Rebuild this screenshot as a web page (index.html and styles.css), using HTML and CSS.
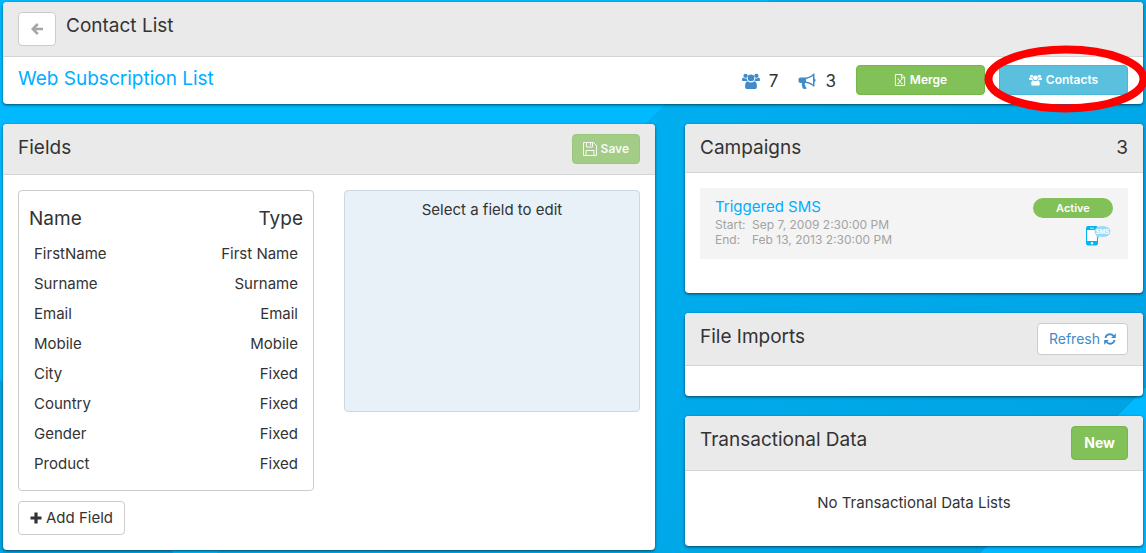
FILE: index.html
```html
<!DOCTYPE html>
<html lang="en">
<head>
<meta charset="utf-8">
<title>Contact List</title>
<link rel="stylesheet" href="styles.css">
</head>
<body>
<svg class="symbols" aria-hidden="true">
  <symbol id="users" viewBox="0 0 20 18">
    <circle cx="4" cy="3.3" r="2.4"/><circle cx="16" cy="3.3" r="2.4"/><circle cx="10" cy="5.6" r="3.7"/>
    <path d="M0 8.200C0 6.300.6 5.200 1.500 5.200C2.500 6.300 4.200 6.500 5.300 6C5.300 7.500 5.900 8.500 6.300 9H1.700C.6 9 0 8.900 0 8.200ZM20 8.200C20 6.300 19.400 5.200 18.500 5.200C17.500 6.300 15.800 6.500 14.700 6C14.700 7.500 14.100 8.500 13.700 9H18.300C19.400 9 20 8.900 20 8.200ZM6.400 9.200C8.600 11 11.400 11 13.600 9.200C15.700 9.200 16.600 12 16.600 15C16.600 17 15.600 18 14 18H6C4.400 18 3.400 17 3.400 15C3.400 12 4.300 9.200 6.400 9.200Z"/>
  </symbol>
</svg>
<main class="page">
  <section class="panel">
    <header class="panel-head top-head">
      <button class="btn back" aria-label="Back">
        <svg class="icon-12" viewBox="0 0 12 12"><path d="M6.800 1L1.800 6L6.800 11M2 6H12" fill="none" stroke="currentColor" stroke-width="2.600"/></svg>
      </button>
      <h1>Contact List</h1>
    </header>
    <div class="summary">
      <h2 class="list-name"><a href="#">Web Subscription List</a></h2>
      <span class="stat"><svg class="icon-18" viewBox="0 0 20 18"><use href="#users"/></svg>7</span>
      <span class="stat"><svg class="icon-18" viewBox="0 0 18 18"><path fill-rule="evenodd" d="M15.500 1.500H16.500V6.500C18 7 18 9.500 16.500 10V14.500H15.500C13 12.300 10 11 7.200 11C6.300 12 6.800 13 7.600 13.800C7 15 8 15.300 8.800 16C8 17.300 5.800 17.200 4.800 16.500C4.300 14.700 3.500 13 4 11H2.500C1.300 11 .5 10.200 .5 9V7.500C.5 6.300 1.300 5.500 2.500 5.500H7C10 5.500 13 4 15.500 1.500ZM15 4C13 5.500 10.800 6.500 8 6.900V9.600C10.800 10 13 11 15 12.500Z"/></svg>3</span>
      <div class="actions">
        <button class="btn green small">
          <svg class="icon-12" viewBox="0 0 12 13"><path class="outline" d="M1 .5H8L11 3.500V12.500H1ZM7.500 .5V4H11M4 5.500L8 10.500M8 5.500L4 10.500M3.300 5.500H5M7 5.500H8.700M3.300 10.500H5M7 10.500H8.700"/></svg>Merge</button>
        <div class="marked">
          <button class="btn cyan small"><svg class="icon-13" viewBox="0 0 20 18"><use href="#users"/></svg>Contacts</button>
          <svg class="ring" viewBox="0 0 164 68" aria-hidden="true"><ellipse cx="82" cy="34" rx="77.500" ry="29.500" fill="none" stroke="#f00" stroke-width="8"/></svg>
        </div>
      </div>
    </div>
  </section>

  <div class="columns">
    <section class="panel fields">
      <header class="panel-head">
        <h2>Fields</h2>
        <button class="btn green small save" disabled>
          <svg class="icon-14" viewBox="0 0 14 14"><path class="outline" d="M.5 .5H10.500L13.500 3.500V13.500H.5ZM3.500 .5V5H9.500V.5M7.500 1V3.500M3 13.500V8.500H11V13.500"/></svg>Save</button>
      </header>
      <div class="field-area">
        <div class="field-list">
          <div class="table-box">
            <table>
              <thead><tr><th>Name</th><th>Type</th></tr></thead>
              <tbody>
                <tr><td>FirstName</td><td>First Name</td></tr>
                <tr><td>Surname</td><td>Surname</td></tr>
                <tr><td>Email</td><td>Email</td></tr>
                <tr><td>Mobile</td><td>Mobile</td></tr>
                <tr><td>City</td><td>Fixed</td></tr>
                <tr><td>Country</td><td>Fixed</td></tr>
                <tr><td>Gender</td><td>Fixed</td></tr>
                <tr><td>Product</td><td>Fixed</td></tr>
              </tbody>
            </table>
          </div>
          <button class="btn add"><svg class="icon-12" viewBox="0 0 12 12"><path d="M6 .5V11.500M.5 6H11.500" stroke="currentColor" stroke-width="3.200"/></svg>Add Field</button>
        </div>
        <div class="editor">Select a field to edit</div>
      </div>
    </section>

    <div class="side">
      <section class="panel">
        <header class="panel-head"><h2>Campaigns</h2><span class="count">3</span></header>
        <div class="campaigns">
          <article class="campaign">
            <div>
              <h3><a href="#">Triggered SMS</a></h3>
              <dl><dt>Start:</dt><dd>Sep 7, 2009 2:30:00 PM</dd><dt>End:</dt><dd>Feb 13, 2013 2:30:00 PM</dd></dl>
            </div>
            <div class="status">
              <span class="pill">Active</span>
              <svg class="sms" viewBox="0 0 25 20"><path fill="#00b5f1" fill-rule="evenodd" d="M2 0H10Q12 0 12 2V17.500Q12 19.500 10 19.500H2Q0 19.500 0 17.500V2Q0 0 2 0ZM1.200 4V15H10.800V4Z"/><path fill="#fff" d="M1.200 4H10.800V15H1.200ZM4 1.800H8V2.500H4Z"/><circle cx="6" cy="17.200" r="1.200" fill="#fff"/><path d="M9.500 9L12.500 12L14 9Z" fill="#9bdaf6"/><ellipse cx="16.500" cy="5.500" rx="8" ry="5.500" fill="#9bdaf6"/><text x="16.500" y="7.700" text-anchor="middle" class="sms-text">SMS</text></svg>
            </div>
          </article>
        </div>
      </section>
      <section class="panel">
        <header class="panel-head"><h2>File Imports</h2>
          <button class="btn refresh">Refresh<svg class="icon-12" viewBox="0 0 12 12"><path d="M1.500 5C2 1.200 7 0 9.500 3M10.500 7C10 10.800 5 12 2.500 9" fill="none" stroke="currentColor" stroke-width="1.900"/><path d="M11.800 .3V5H7.100ZM.2 11.700V7H4.900Z"/></svg></button>
        </header>
        <div class="imports"></div>
      </section>
      <section class="panel">
        <header class="panel-head"><h2>Transactional Data</h2><button class="btn green new">New</button></header>
        <p class="empty">No Transactional Data Lists</p>
      </section>
    </div>
  </div>
</main>
</body>
</html>
```

FILE: styles.css
```css
* { box-sizing: border-box; }
body {
  margin: 0;
  min-height: 100vh;
  color: #333;
  font: 15px/20px Inter, "Liberation Sans", sans-serif;
  background:
    linear-gradient(45deg, #00a4e4 123px, transparent 123px),
    linear-gradient(135deg, #00b9ff 544px, #00aeef 544px, #00a4e4 1084px, #00b9ff 1084px);
}
h1, h2, h3, p, dl, dd { margin: 0; font-weight: 400; }
h1, h2 { font-size: 19px; line-height: 20px; }
a { color: #00aeff; text-decoration: none; }
svg { fill: currentColor; flex: none; }
.outline { fill: none; stroke: currentColor; }
.symbols { position: absolute; width: 0; height: 0; }
.icon-12 { width: 12px; height: 12px; }
.icon-13 { width: 13px; height: 12px; }
.icon-14 { width: 14px; height: 14px; }
.icon-18 { width: 18px; height: 18px; color: #428bca; }

.page { padding: 2px 3px 3px; }
.panel { background: #fff; border-radius: 4px; box-shadow: 0 1px 3px rgba(0, 0, 0, .6); }
.panel-head {
  display: flex;
  align-items: flex-start;
  justify-content: space-between;
  min-height: 49px;
  padding: 10px 15px;
  background: #eaeaea;
  border-bottom: 1px solid #d5d5d5;
  border-radius: 4px 4px 0 0;
}
.panel-head h2, .panel-head h1, .count { margin-top: 4px; }
.count { font-size: 19px; }
.top-head { justify-content: flex-start; gap: 10px; }

.btn {
  display: inline-flex;
  align-items: center;
  justify-content: center;
  gap: 4px;
  height: 34px;
  padding: 0 11px;
  border: 1px solid #ccc;
  border-radius: 4px;
  background: #fff;
  color: #333;
  font: inherit;
}
.back { width: 38px; color: #aaa5a5; }
.small { height: 30px; font-size: 12px; font-weight: 600; }
.green { background: #82c058; border-color: #75b749; color: #fff; }
.cyan { background: #5bc0de; border-color: #46b8da; color: #fff; }
.save { padding: 0 10px; opacity: .68; }
.refresh { height: 32px; color: #428bca; font-size: 14px; }
.new { padding: 0 12px; font-size: 14px; font-weight: 700; }

.summary { display: flex; align-items: flex-start; padding: 8px 15px 9px; }
.list-name { flex: 1; margin-top: 4px; }
.stat { display: flex; align-items: center; gap: 9px; margin: 6px 20px 0 0; font-size: 17px; }
.actions { display: flex; gap: 14px; }
.actions .btn { width: 129px; }
.marked { position: relative; }
.ring { position: absolute; left: -15px; top: -20px; width: 164px; height: 68px; pointer-events: none; }

.columns { display: grid; grid-template-columns: 652fr 458fr; gap: 30px; margin-top: 20px; align-items: start; }
.field-area { display: grid; grid-template-columns: 1fr 1fr; gap: 30px; padding: 15px; align-items: start; }
.table-box { padding: 12px 10px 11px; border: 1px solid #ccc; border-radius: 4px; }
table { width: 100%; border-collapse: collapse; }
th { height: 36px; padding: 0 0 4px; font-size: 19px; font-weight: 400; text-align: left; }
td { height: 30px; padding: 0 5px; }
th:last-child, td:last-child { text-align: right; }
.add { margin-top: 10px; }
.editor { min-height: 222px; padding: 9px; border: 1px solid #ccd8df; border-radius: 4px; background: #e8f1f8; text-align: center; }

.side { display: grid; gap: 20px; }
.campaigns { min-height: 120px; padding: 15px; }
.campaign { display: flex; justify-content: space-between; padding: 9px 15px 12px; background: #f4f4f4; }
h3 { font-size: 15px; line-height: 20px; }
dl { display: grid; grid-template-columns: 37px auto; color: #a3a3a3; font-size: 12px; line-height: 15px; }
.status { display: flex; flex-direction: column; align-items: flex-end; gap: 8px; padding-top: 1px; }
.pill { width: 80px; border-radius: 10px; background: #82c058; color: #fff; font-size: 11px; font-weight: 600; text-align: center; }
.sms { width: 25px; height: 20px; margin-right: 2px; }
.sms-text { fill: #fff; font: 700 6px Inter, sans-serif; }
.imports { height: 30px; }
.empty { padding: 22px 15px 33px; text-align: center; }
```
